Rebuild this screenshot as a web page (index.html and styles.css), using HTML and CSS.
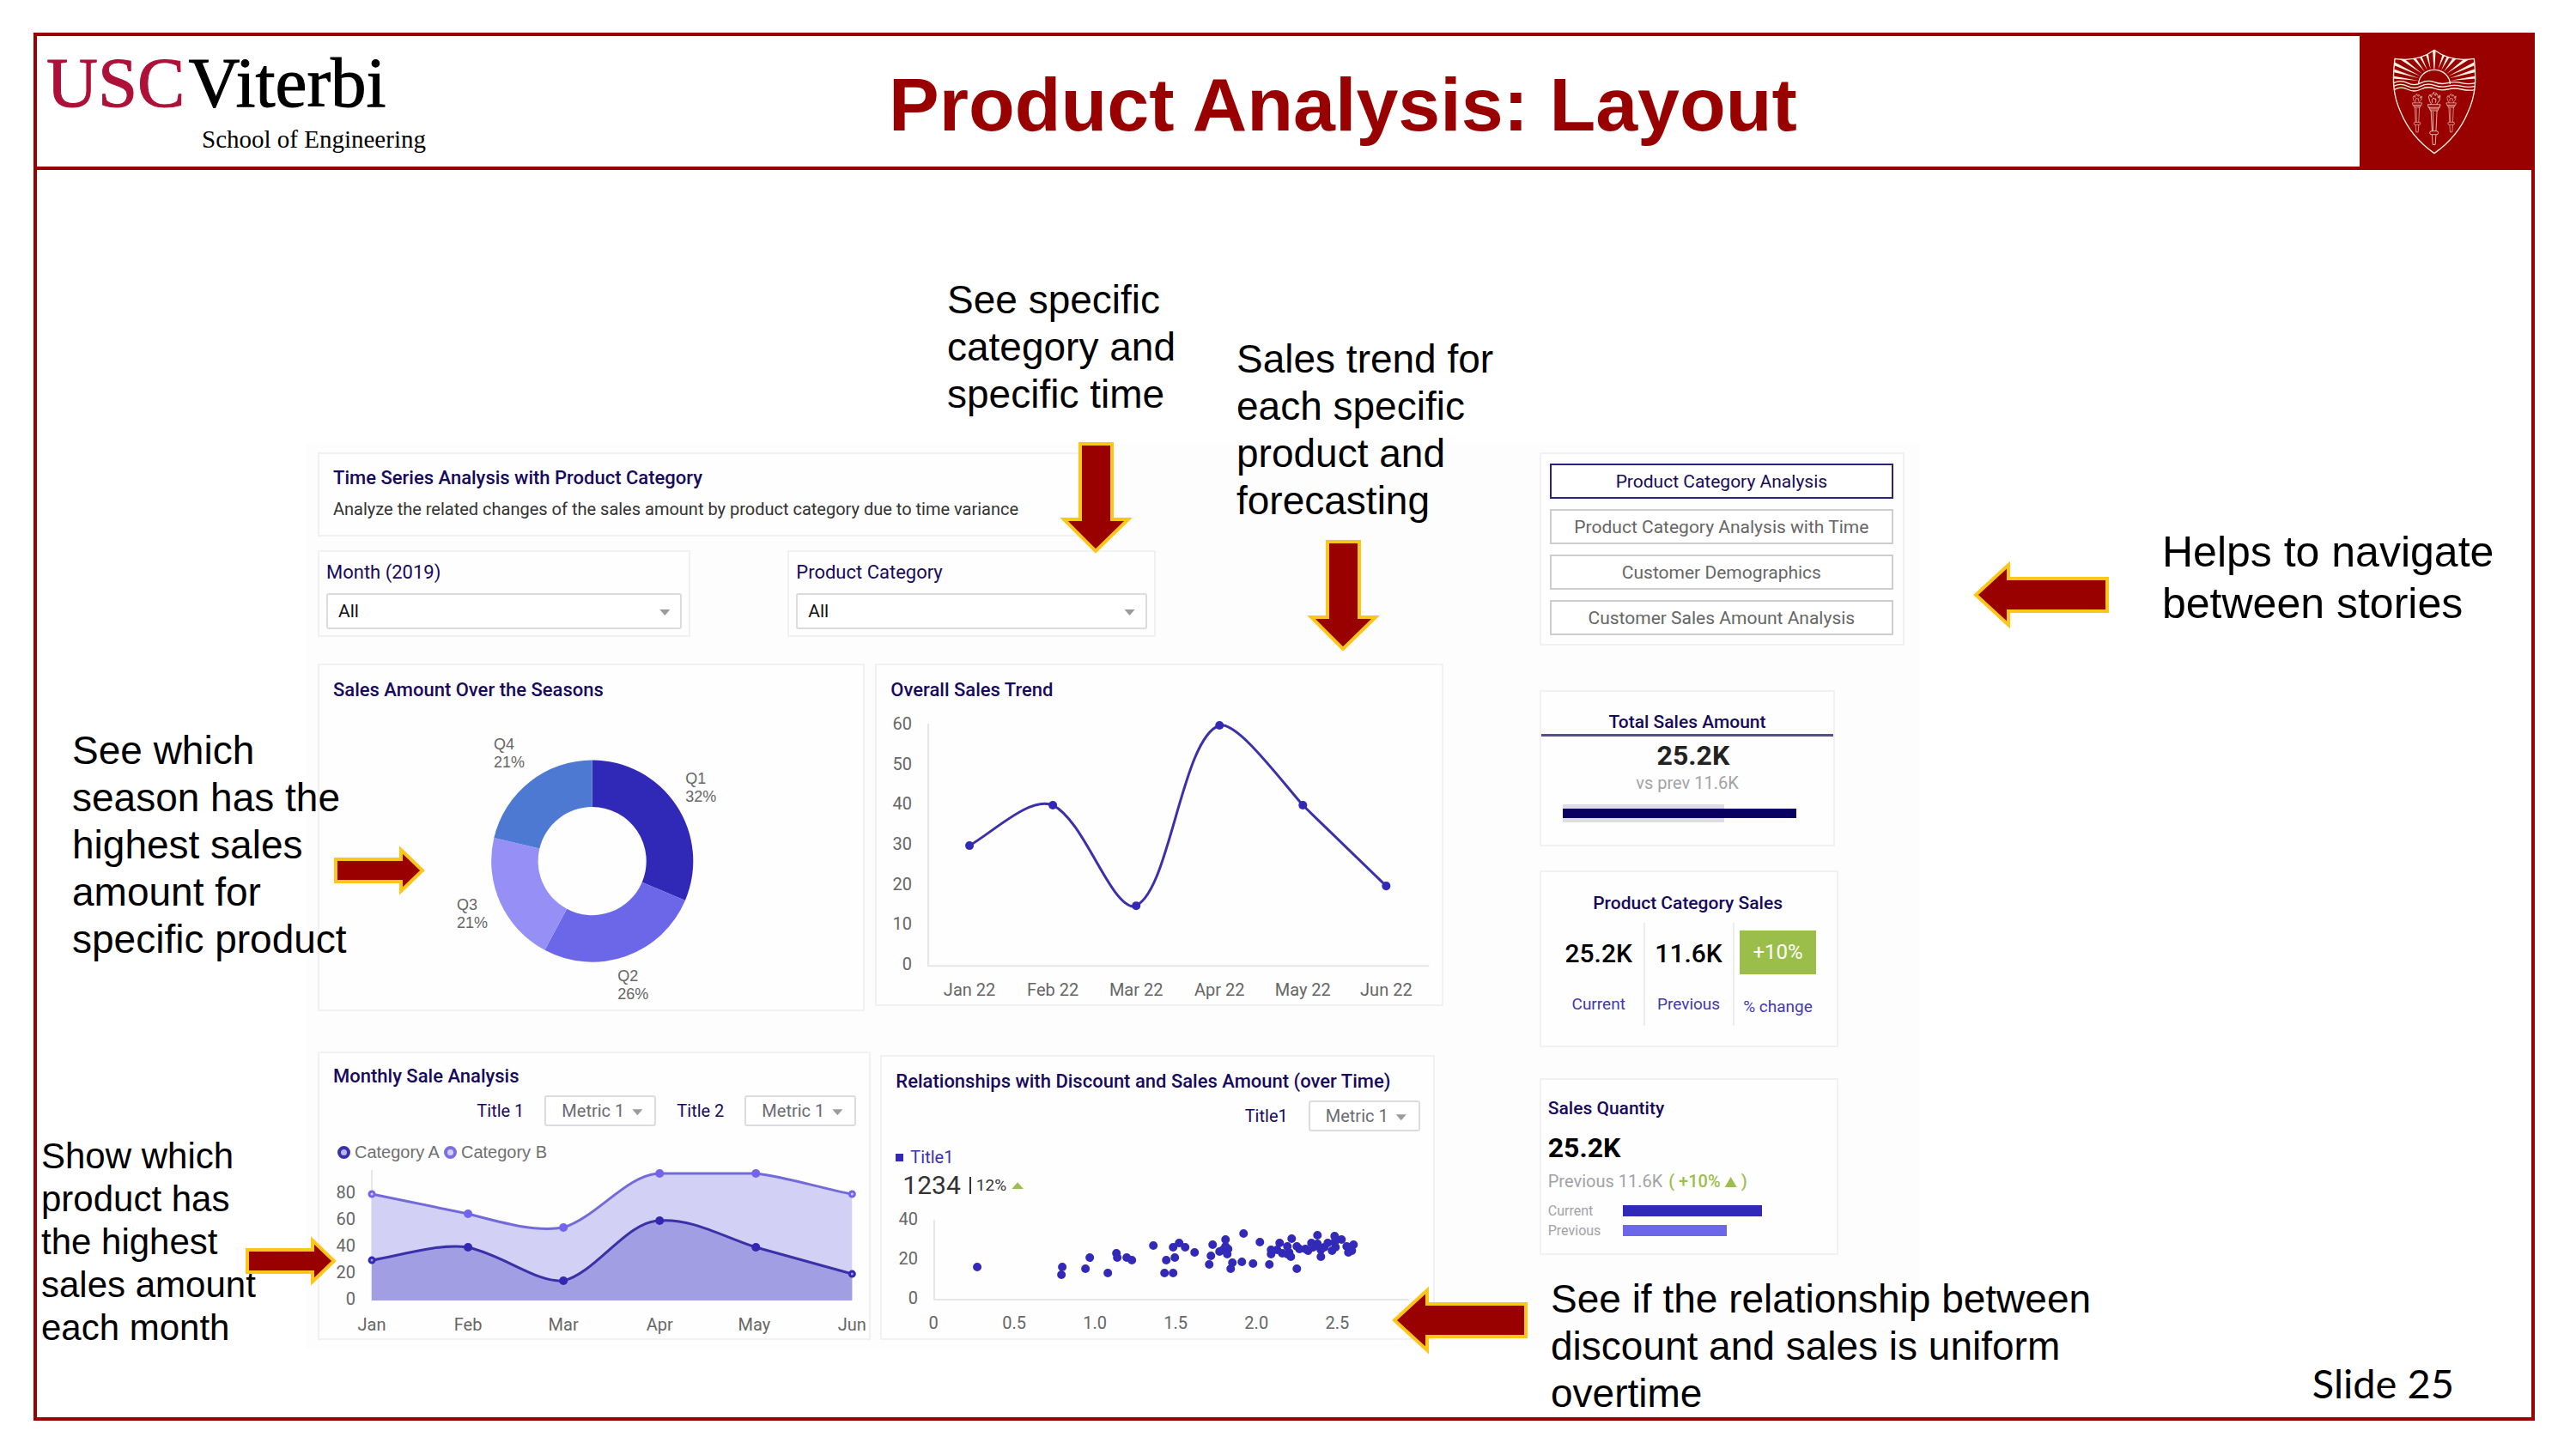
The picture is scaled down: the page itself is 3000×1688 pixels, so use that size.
FILE: index.html
```html
<!DOCTYPE html>
<html lang="en">
<head>
<meta charset="utf-8">
<title>Product Analysis: Layout</title>
<link rel="stylesheet" href="styles.css">
</head>
<body>
<article class="slide">
  <header class="slide-header">
    <div class="logo">
      <div class="logo-name"><span class="logo-usc">USC</span><span>Viterbi</span></div>
      <div class="logo-school">School of Engineering</div>
    </div>
    <h1 class="slide-title">Product Analysis: Layout</h1>
    <div class="crest">
      <svg class="crest-icon" viewBox="256 80 294 375" aria-hidden="true">
        <defs>
          <clipPath id="sky"><path d="M265 117Q345 130 403 87Q461 130 542 117L546 215H260Z"/></clipPath>
          <g id="torch">
            <path d="M-9 42V38Q-15 30 -15 22Q-19 16 -12 8Q-12 14 -8 17Q-9 6 0 0Q-2 8 4 12Q7 8 6 3Q15 12 12 20Q17 17 18 10Q20 30 9 38V42M-5 36Q-9 26 -2 19Q0 26 5 22Q7 30 4 36"/>
            <path d="M-19 42H19L17 52H-17ZM-15 52L-11 63H11L15 52M-12 57H12M-9 63L-6 132M9 63L6 132M-3 66V130"/>
            <rect x="-13" y="132" width="26" height="12" rx="6"/>
            <path d="M-6 144L-4 178H4L6 144"/>
          </g>
        </defs>
        <g clip-path="url(#sky)" fill="#fff5e6">
          <path d="M401 153L397 84H408L404 153ZM390 154L370 92L380 88ZM416 154L436 88L446 92ZM379 158L342 96L353 94ZM427 158L453 94L466 96ZM370 163L312 100L327 98ZM436 163L479 98L496 100ZM361 170L262 106L275 98ZM445 170L531 98L546 106ZM355 178L256 138V125ZM451 178L550 125V138ZM350 186L256 163V151ZM456 186L550 151V163ZM348 194L256 186V177ZM458 194L550 177V186Z"/>
        </g>
        <g fill="none" stroke="#fff5e6" stroke-width="4" stroke-linejoin="round">
          <path d="M265 117Q345 130 403 87Q461 130 542 117C550 190 548 245 520 305Q485 390 403 448Q321 390 286 305C258 245 256 190 265 117Z"/>
          <path d="M348 206A55 50 0 0 1 458 206"/>
          <path d="M261 202Q285 190 309 202T356 202T403 199T450 202T498 202T546 202M261 213Q285 201 309 213T356 213T403 210T450 213T498 213T546 213M262 226Q285 212 309 224T356 224T403 221T450 224T498 224T545 226"/>
        </g>
        <g fill="none" stroke="#fff5e6" stroke-width="2">
          <use href="#torch" transform="translate(402 234) scale(1.15 1.03)"/>
          <use href="#torch" transform="translate(343 240) scale(.9 .75)"/>
          <use href="#torch" transform="translate(462 240) scale(.9 .75)"/>
        </g>
      </svg>
    </div>
  </header>

  <main class="slide-body">
    <section class="dashboard">
      <div class="reports">
        <section class="card intro">
          <h2 class="card-title">Time Series Analysis with Product Category</h2>
          <p class="intro-text">Analyze the related changes of the sales amount by product category due to time variance</p>
        </section>

        <div class="filters">
          <div class="card filter">
            <label class="filter-label" for="month">Month (2019)</label>
            <span class="picker"><select id="month"><option>All</option></select></span>
          </div>
          <div class="card filter">
            <label class="filter-label" for="category">Product Category</label>
            <span class="picker"><select id="category"><option>All</option></select></span>
          </div>
        </div>

        <div class="row row-top">
          <section class="card seasons">
            <h2 class="card-title">Sales Amount Over the Seasons</h2>
            <svg class="chart" viewBox="372 818 633 358">
              <g transform="translate(689.5 1003)">
                <path fill="#3029b8" d="M0-117.5A117.5 117.5 0 0 1 108.2 45.9L58 24.6A63 63 0 0 0 0-63Z"/>
                <path fill="#6c66e8" d="M108.2 45.9A117.5 117.5 0 0 1-55.2 103.7L-29.6 55.6A63 63 0 0 0 58 24.6Z"/>
                <path fill="#9690f6" d="M-55.2 103.7A117.5 117.5 0 0 1-114.3-27L-61.3-14.5A63 63 0 0 0-29.6 55.6Z"/>
                <path fill="#4e79d3" d="M-114.3-27A117.5 117.5 0 0 1 0-117.5V-63A63 63 0 0 0-61.3-14.5Z"/>
              </g>
              <g class="donut-label">
                <text x="575" y="873">Q4</text><text x="575" y="894">21%</text>
                <text x="798" y="913">Q1</text><text x="798" y="934">32%</text>
                <text x="532" y="1060">Q3</text><text x="532" y="1081">21%</text>
                <text x="719" y="1143">Q2</text><text x="719" y="1164">26%</text>
              </g>
            </svg>
          </section>

          <section class="card trend">
            <h2 class="card-title">Overall Sales Trend</h2>
            <svg class="chart" viewBox="1021 818 657 352">
              <path class="axis" d="M1081 843V1125H1664"/>
              <g class="tick tick-y">
                <text x="1062" y="850">60</text><text x="1062" y="897">50</text><text x="1062" y="943">40</text>
                <text x="1062" y="990">30</text><text x="1062" y="1037">20</text><text x="1062" y="1083">10</text><text x="1062" y="1130">0</text>
              </g>
              <g class="tick tick-x">
                <text x="1129" y="1160">Jan 22</text><text x="1226" y="1160">Feb 22</text><text x="1323" y="1160">Mar 22</text>
                <text x="1420" y="1160">Apr 22</text><text x="1517" y="1160">May 22</text><text x="1614" y="1160">Jun 22</text>
              </g>
              <path fill="none" stroke="#3a30ac" stroke-width="3" d="M1129 985C1158 968 1200 927 1226 938C1262 955 1292 1054 1320 1056C1362 1045 1375 860 1420 845C1440 841 1482 897 1517 938L1614 1032"/>
              <g fill="#3329b5">
                <circle cx="1129" cy="985" r="5"/><circle cx="1226" cy="938" r="5"/><circle cx="1323" cy="1055" r="5"/>
                <circle cx="1420" cy="845" r="5"/><circle cx="1517" cy="938" r="5"/><circle cx="1614" cy="1032" r="5"/>
              </g>
            </svg>
          </section>
        </div>

        <div class="row row-bottom">
          <section class="card monthly">
            <h2 class="card-title">Monthly Sale Analysis</h2>
            <div class="metrics">
              <label for="metric-a">Title 1</label>
              <span class="picker picker-small"><select id="metric-a"><option>Metric 1</option></select></span>
              <label for="metric-b">Title 2</label>
              <span class="picker picker-small"><select id="metric-b"><option>Metric 1</option></select></span>
            </div>
            <div class="legend">
              <span class="legend-item"><i class="ring ring-a"></i>Category A</span>
              <span class="legend-item"><i class="ring ring-b"></i>Category B</span>
            </div>
            <svg class="chart" viewBox="372 1356 640 203">
              <path class="axis" d="M433 1363V1515"/>
              <path fill="#d3d0f6" d="M433 1391L545 1414C590 1426 624 1435 656 1430C695 1418 730 1368 768 1367H880C915 1371 955 1384 992 1391V1515H433Z"/>
              <path fill="#a29ee4" d="M433 1468C465 1463 510 1448 545 1453C588 1463 624 1494 656 1492C695 1482 730 1422 768 1422C806 1419 842 1441 880 1453L992 1484V1515H433Z"/>
              <path fill="none" stroke="#736ada" stroke-width="3" d="M433 1391L545 1414C590 1426 624 1435 656 1430C695 1418 730 1368 768 1367H880C915 1371 955 1384 992 1391"/>
              <path fill="none" stroke="#3a30a8" stroke-width="3" d="M433 1468C465 1463 510 1448 545 1453C588 1463 624 1494 656 1492C695 1482 730 1422 768 1422C806 1419 842 1441 880 1453L992 1484"/>
              <g fill="#7165ec">
                <circle cx="545" cy="1414" r="5"/><circle cx="656" cy="1430" r="5"/><circle cx="768" cy="1367" r="5"/><circle cx="880" cy="1367" r="5"/>
              </g>
              <g fill="#3228b4">
                <circle cx="545" cy="1453" r="5"/><circle cx="656" cy="1492" r="5"/><circle cx="768" cy="1422" r="5"/><circle cx="880" cy="1453" r="5"/>
              </g>
              <g fill="#d3d0f6" stroke="#7165ec" stroke-width="3"><circle cx="433" cy="1391" r="3"/><circle cx="992" cy="1391" r="3"/></g>
              <g fill="#a29ee4" stroke="#3228b4" stroke-width="3"><circle cx="433" cy="1468" r="3"/><circle cx="992" cy="1484" r="3"/></g>
              <g class="tick tick-y">
                <text x="414" y="1396">80</text><text x="414" y="1427">60</text><text x="414" y="1458">40</text><text x="414" y="1489">20</text><text x="414" y="1520">0</text>
              </g>
              <g class="tick tick-x">
                <text x="433" y="1550">Jan</text><text x="545" y="1550">Feb</text><text x="656" y="1550">Mar</text>
                <text x="768" y="1550">Apr</text><text x="878" y="1550">May</text><text x="992" y="1550">Jun</text>
              </g>
            </svg>
          </section>

          <section class="card discount">
            <h2 class="card-title">Relationships with Discount and Sales Amount (over Time)</h2>
            <div class="metrics">
              <label for="metric-c">Title1</label>
              <span class="picker picker-small"><select id="metric-c"><option>Metric 1</option></select></span>
            </div>
            <div class="series"><i class="series-mark"></i>Title1</div>
            <div class="readout"><span class="readout-value">1234</span><i class="readout-bar"></i><span class="readout-change">12%</span><i class="up"></i></div>
            <svg class="chart" viewBox="1027 1399 641 160">
              <path class="axis" d="M1088 1421V1514H1640"/>
              <g class="tick tick-y">
                <text x="1069" y="1427">40</text><text x="1069" y="1473">20</text><text x="1069" y="1519">0</text>
              </g>
              <g class="tick tick-x">
                <text x="1087" y="1548">0</text><text x="1181" y="1548">0.5</text><text x="1275" y="1548">1.0</text>
                <text x="1369" y="1548">1.5</text><text x="1463" y="1548">2.0</text><text x="1557" y="1548">2.5</text>
              </g>
              <path class="dots" d="M1138 1476h0M1237 1476h0M1236 1485h0M1264 1478h0M1269 1465h0M1290 1483h0M1300 1460h0M1301 1465h0M1312 1465h0M1318 1468h0M1343 1451h0M1356 1483h0M1366 1483h0M1358 1468h0M1368 1465h0M1366 1453h0M1373 1448h0M1380 1453h0M1391 1459h0M1408 1473h0M1410 1463h0M1412 1450h0M1420 1458h0M1427 1444h0M1427 1452h0M1430 1455h0M1429 1461h0M1424 1456h0M1435 1471h0M1433 1478h0M1446 1470h0M1448 1437h0M1459 1472h0M1467 1447h0M1478 1473h0M1480 1456h0M1480 1461h0M1487 1456h0M1490 1448h0M1493 1460h0M1499 1452h0M1499 1461h0M1503 1464h0M1501 1459h0M1504 1443h0M1510 1452h0M1510 1478h0M1513 1455h0M1520 1455h0M1523 1457h0M1527 1448h0M1529 1453h0M1534 1439h0M1534 1449h0M1538 1464h0M1538 1456h0M1542 1453h0M1546 1448h0M1551 1457h0M1554 1440h0M1555 1453h0M1554 1447h0M1562 1444h0M1568 1452h0M1570 1459h0M1574 1457h0M1576 1450h0"/>
            </svg>
          </section>
        </div>
      </div>

      <aside class="sidebar">
        <nav class="card stories">
          <button class="story story-active" type="button">Product Category Analysis</button>
          <button class="story" type="button">Product Category Analysis with Time</button>
          <button class="story" type="button">Customer Demographics</button>
          <button class="story" type="button">Customer Sales Amount Analysis</button>
        </nav>

        <section class="card total">
          <h2 class="card-title total-title">Total Sales Amount</h2>
          <div class="big-number total-number">25.2K</div>
          <div class="total-previous">vs prev 11.6K</div>
          <div class="bullet"><div class="bullet-range"></div><div class="bullet-value"></div></div>
        </section>

        <section class="card category-sales">
          <h2 class="card-title category-title">Product Category Sales</h2>
          <div class="figures">
            <div class="figure"><div class="figure-value">25.2K</div><div class="figure-label">Current</div></div>
            <div class="figure"><div class="figure-value">11.6K</div><div class="figure-label">Previous</div></div>
            <div class="figure"><div class="figure-badge">+10%</div><div class="figure-label">% change</div></div>
          </div>
        </section>

        <section class="card quantity">
          <h2 class="card-title">Sales Quantity</h2>
          <div class="big-number quantity-number">25.2K</div>
          <div class="quantity-previous">Previous 11.6K <span class="gain">( +10% <i class="up"></i> )</span></div>
          <div class="bars">
            <span>Current</span><div class="bar bar-current"></div>
            <span>Previous</span><div class="bar bar-previous"></div>
          </div>
        </section>
      </aside>
    </section>

    <p class="note note-time">See specific<br>category and<br>specific time</p>
    <p class="note note-trend">Sales trend for<br>each specific<br>product and<br>forecasting</p>
    <p class="note note-season">See which<br>season has the<br>highest sales<br>amount for<br>specific product</p>
    <p class="note note-month">Show which<br>product has<br>the highest<br>sales amount<br>each month</p>
    <p class="note note-nav">Helps to navigate<br>between stories</p>
    <p class="note note-discount">See if the relationship between<br>discount and sales is uniform<br>overtime</p>

    <svg class="arrow arrow-time" width="91" height="137"><path d="M27 6H64V94H83L45 131L8 94H27Z"/></svg>
    <svg class="arrow arrow-trend" width="91" height="137"><path d="M27 6H64V94H83L45 131L8 94H27Z"/></svg>
    <svg class="arrow arrow-season" width="112" height="66"><path d="M6 20H82V9L107 33L82 57V46H6Z"/></svg>
    <svg class="arrow arrow-month" width="112" height="66"><path d="M6 20H82V9L107 33L82 57V46H6Z"/></svg>
    <svg class="arrow arrow-nav" width="164" height="88"><path d="M158 25H43V9L5 44L43 79V63H158Z"/></svg>
    <svg class="arrow arrow-discount" width="164" height="88"><path d="M158 25H43V9L5 44L43 79V63H158Z"/></svg>
  </main>
  <footer class="slide-footer">Slide 25</footer>
</article>
</body>
</html>
```
FILE: styles.css
```css
* { box-sizing: border-box; }

body {
  margin: 0;
  min-height: 100vh;
  padding: 38px 48px 33px 39px;
  display: flex;
  background: #fff;
  color: #000;
  font-family: Roboto, "Liberation Sans", sans-serif;
}

h1, h2, p { margin: 0; }

.slide {
  flex: 1;
  display: flex;
  flex-direction: column;
  border: 4px solid #990000;
}

/* Header */
.slide-header {
  display: flex;
  min-height: 156px;
  border-bottom: 4px solid #990000;
}
.logo {
  padding: 12px 0 0 11px;
  font-family: "Liberation Serif", serif;
}
.logo-name {
  display: flex;
  gap: 4px;
  font-size: 83px;
  line-height: 84px;
  -webkit-text-stroke: 1px;
}
.logo-usc { color: #ae1038; }
.logo-school {
  margin: 8px 0 0 181px;
  font-size: 29px;
  line-height: 32px;
}
.slide-title {
  flex: 1;
  padding: 30px 116px 0 0;
  text-align: center;
  font: bold 88px/100px "Liberation Sans", sans-serif;
  color: #990000;
}
.crest {
  width: 200px;
  margin-bottom: -4px;
  padding: 14px 0 0 38px;
  background: #990000;
}
.crest-icon { display: block; width: 98px; height: 125px; }

/* Dashboard */
.slide-body { position: relative; }
.dashboard {
  margin: 319px 713px 0 314px;
  padding: 10px 17px 11px 13px;
  display: grid;
  grid-template-columns: minmax(0, 1310fr) minmax(0, 425fr);
  gap: 112px;
  background: #fdfdfd;
}
.card {
  border: 2px solid #f1f1f3;
  background: #fefefe;
}
.card-title {
  font-size: 21px;
  line-height: 28px;
  font-weight: 500;
  color: #170a5c;
}
.reports .card-title { font-size: 22px; }
.intro { width: 69%; padding: 14px 16px 16px; }
.intro-text {
  margin-top: 8px;
  font-size: 20px;
  line-height: 28px;
  color: #333;
}

.filters {
  margin-top: 16px;
  display: grid;
  grid-template-columns: 434fr 428fr 222fr;
  column-gap: 113px;
}
.filter { padding: 10px 8px 7px; }
.filter-label {
  display: block;
  margin-bottom: 10px;
  font-size: 22px;
  line-height: 28px;
  color: #170a5c;
}
.picker { position: relative; display: block; }
.picker::after {
  content: "";
  position: absolute;
  right: 14px;
  top: 50%;
  width: 12px;
  height: 7px;
  margin-top: -2px;
  background: #9a9a9f;
  clip-path: polygon(0 0, 100% 0, 50% 100%);
  pointer-events: none;
}
.picker select {
  appearance: none;
  display: block;
  width: 100%;
  height: 42px;
  padding: 0 12px;
  border: 2px solid #dcdce0;
  border-radius: 3px;
  background: #fff;
  color: #111;
  font: 21px/24px Roboto, sans-serif;
}
.picker-small { width: 130px; }
.picker-small select { height: 36px; padding: 0 18px; color: #6b6b72; font-size: 20px; }
.picker-small::after { right: 16px; }

.row { display: grid; }
.row-top {
  margin-top: 31px;
  grid-template-columns: minmax(0, 637fr) minmax(0, 661fr);
  gap: 12px;
  align-items: start;
}
.row-bottom {
  margin-top: 47px;
  grid-template-columns: minmax(0, 644fr) minmax(0, 645fr);
  gap: 11px;
  align-items: end;
  padding-right: 10px;
}
.row .card-title { padding: 0 16px; }
.seasons, .trend, .discount { padding-top: 15px; }
.monthly { padding-top: 13px; }
.chart { display: block; width: 100%; }
.axis { fill: none; stroke: #e6e6ea; stroke-width: 2; }
.tick { font-size: 20px; fill: #666; }
.tick-y { text-anchor: end; }
.tick-x { text-anchor: middle; }
.donut-label { font: 18px "Liberation Sans", sans-serif; fill: #666; }
.dots { fill: none; stroke: #3329b8; stroke-width: 10; stroke-linecap: round; }

.metrics {
  display: flex;
  justify-content: flex-end;
  align-items: center;
  gap: 24px;
  margin-top: 8px;
  padding-right: 15px;
  font-size: 20px;
  line-height: 24px;
  color: #170a5c;
}
.legend {
  display: flex;
  gap: 5px;
  padding: 16px 0 0 21px;
  font: 20px/28px "Liberation Sans", sans-serif;
  color: #707070;
}
.legend-item { display: flex; align-items: center; gap: 5px; }
.ring { width: 15px; height: 15px; border: 4px solid; border-radius: 50%; }
.ring-a { border-color: #3a30a8; background: #b9b4f4; }
.ring-b { border-color: #7a70e0; background: #d3d0f6; }

.series {
  display: flex;
  align-items: center;
  gap: 8px;
  margin-top: 16px;
  padding-left: 16px;
  font-size: 20px;
  line-height: 28px;
  color: #3a30b0;
}
.series-mark { width: 9px; height: 9px; background: #3329b8; }
.readout {
  display: flex;
  align-items: center;
  padding-left: 24px;
  line-height: 36px;
  margin-top: 1px;
  color: #333;
}
.readout-value { font-size: 30px; }
.readout-bar { width: 2px; height: 20px; margin: 0 6px 0 10px; background: #333; }
.readout-change { margin-right: 6px; font-size: 19px; }
.up {
  display: inline-block;
  width: 14px;
  height: 12px;
  background: #9cbf4b;
  clip-path: polygon(50% 0, 100% 100%, 0 100%);
}
.readout .up { height: 8px; }

/* Sidebar */
.stories {
  display: grid;
  gap: 12px;
  padding: 11px 11px 10px 10px;
}
.story {
  height: 41px;
  padding: 0;
  border: 2px solid #cdcdd0;
  background: #fff;
  color: #666;
  font: 21px/28px Roboto, sans-serif;
}
.story-active { border-color: #2c2080; color: #170a5c; }

.big-number { font-size: 32px; line-height: 40px; font-weight: 700; }
.total {
  width: 81%;
  margin-top: 52px;
  padding: 21px 0 26px;
  text-align: center;
}
.total-title { border-bottom: 3px solid #55508a; }
.total-number { padding: 2px 0 0 14px; box-sizing: content-box; color: #222; }
.total-previous { font-size: 20px; line-height: 24px; color: #a2a2a6; }
.bullet { position: relative; height: 21px; margin: 13px 43px 0 25px; }
.bullet-range { width: 69%; height: 21px; background: #dedde6; }
.bullet-value { position: absolute; inset: 5px 0 auto; height: 11px; background: #0a0060; }

.category-sales { width: 82%; margin-top: 28px; padding: 22px 18px 23px 15px; }
.category-title { text-align: center; }
.figures {
  display: grid;
  grid-template-columns: repeat(3, 1fr);
  height: 120px;
  margin-top: 9px;
  text-align: center;
}
.figure + .figure { border-left: 2px solid #ededf0; }
.figure-value { margin-top: 18px; font-size: 30px; line-height: 36px; font-weight: 500; }
.figure-label { margin-top: 29px; font-size: 19px; line-height: 24px; color: #4338b0; }
.figure-badge {
  height: 51px;
  margin: 9px 6px 0;
  background: #9bbe4a;
  color: #fff;
  font-size: 24px;
  line-height: 50px;
}
.figure-badge + .figure-label { margin-top: 26px; white-space: nowrap; }

.quantity { width: 82%; margin-top: 36px; padding: 19px 8px 15px; }
.quantity-number { margin-top: 12px; }
.quantity-previous { margin-top: 7px; font-size: 20px; line-height: 24px; color: #a2a2a6; }
.gain { margin-left: 2px; color: #9cbf4b; font-weight: 500; }
.bars {
  display: grid;
  grid-template-columns: 87px 1fr;
  grid-auto-rows: 23px;
  align-items: center;
  margin-top: 11px;
  font-size: 16px;
  line-height: 23px;
  color: #a2a2a6;
}
.bar { height: 13px; }
.bar-current { width: 67%; background: #3029b8; }
.bar-previous { width: 50%; background: #6c66e8; }

/* Notes and arrows laid over the dashboard */
.note {
  position: absolute;
  white-space: nowrap;
  font: 46px/55px "Liberation Sans", sans-serif;
}
.note-time { left: 1060px; top: 124px; }
.note-trend { left: 1397px; top: 193px; }
.note-season { left: 41px; top: 649px; }
.note-month { left: 5px; top: 1124px; font-size: 42px; line-height: 50px; }
.note-nav { left: 2475px; top: 415px; font-size: 50px; line-height: 60px; }
.note-discount { left: 1763px; top: 1288px; }

.arrow { position: absolute; fill: #990000; stroke: #ffc61a; stroke-width: 4; }
.arrow-time { left: 1188px; top: 313px; }
.arrow-trend { left: 1476px; top: 427px; }
.arrow-season { left: 342px; top: 783px; }
.arrow-month { left: 239px; top: 1238px; }
.arrow-nav { left: 2253px; top: 451px; }
.arrow-discount { left: 1576px; top: 1296px; }

.slide-footer {
  margin-top: auto;
  padding: 0 90px 12px;
  text-align: right;
  font: 47px/56px Lato, sans-serif;
}
```
